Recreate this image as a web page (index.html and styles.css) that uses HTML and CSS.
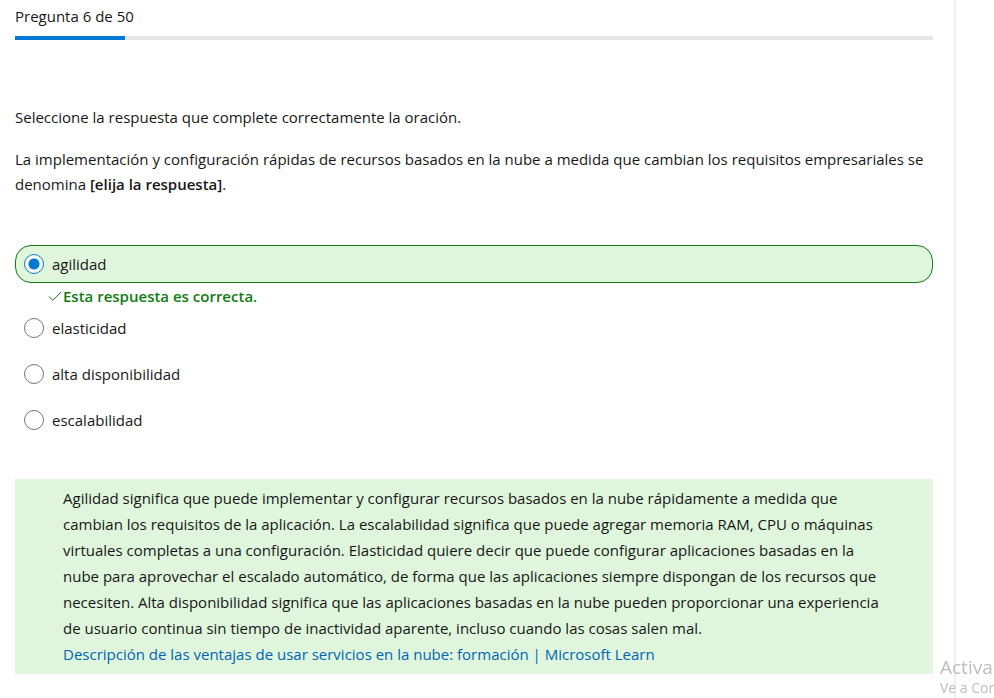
FILE: index.html
```html
<!DOCTYPE html>
<html lang="es">
<head>
<meta charset="utf-8">
<meta name="viewport" content="width=device-width, initial-scale=1">
<title>Pregunta 6 de 50</title>
<link rel="stylesheet" href="styles.css">
</head>
<body>
<main class="quiz">
  <header class="progress">
    <p class="progress-label" id="progress-label">Pregunta 6 de 50</p>
    <div class="progress-track" role="progressbar" aria-labelledby="progress-label" aria-valuemin="0" aria-valuemax="100" aria-valuenow="12">
      <div class="progress-bar" style="width: 12%"></div>
    </div>
  </header>

  <section class="question" id="question">
    <p>Seleccione la respuesta que complete correctamente la oración.</p>
    <p>La implementación y configuración rápidas de recursos basados en la nube a medida que cambian los requisitos empresariales se denomina <strong>[elija la respuesta]</strong>.</p>
  </section>

  <form class="answers" role="radiogroup" aria-labelledby="question">
    <label class="answer answer-correct"><input type="radio" name="answer" checked><span>agilidad</span></label>
    <p class="feedback">
      <svg class="check" viewBox="0 0 14 14" aria-hidden="true"><path d="M1 7.5 4.8 11.3 13 3"/></svg>
      <span>Esta respuesta es correcta.</span>
    </p>
    <label class="answer"><input type="radio" name="answer"><span>elasticidad</span></label>
    <label class="answer"><input type="radio" name="answer"><span>alta disponibilidad</span></label>
    <label class="answer"><input type="radio" name="answer"><span>escalabilidad</span></label>
  </form>

  <section class="explanation">
    <p>Agilidad significa que puede implementar y configurar recursos basados en la nube rápidamente a medida que cambian los requisitos de la aplicación. La escalabilidad significa que puede agregar memoria RAM, CPU o máquinas virtuales completas a una configuración. Elasticidad quiere decir que puede configurar aplicaciones basadas en la nube para aprovechar el escalado automático, de forma que las aplicaciones siempre dispongan de los recursos que necesiten. Alta disponibilidad significa que las aplicaciones basadas en la nube pueden proporcionar una experiencia de usuario continua sin tiempo de inactividad aparente, incluso cuando las cosas salen mal.</p>
    <a href="#">Descripción de las ventajas de usar servicios en la nube: formación | Microsoft Learn</a>
  </section>
</main>
<aside class="watermark">
  <p class="watermark-title">Activa</p>
  <p class="watermark-text">Ve a Cor</p>
</aside>
</body>
</html>
```
FILE: styles.css
```css
* {
  box-sizing: border-box;
}

body {
  margin: 0;
  color: #171717;
  background: #fff;
  font: 15px/25px "Segoe UI", "Open Sans", "Noto Sans", sans-serif;
}

p {
  margin: 0;
}

.quiz {
  min-height: 100vh;
  margin-right: 38px;
  padding: 4px 21px 20px 15px;
  border-right: 2px solid #f0f0f0;
}

.progress-track {
  height: 4px;
  margin-top: 7px;
  background: #e6e6e6;
}

.progress-bar {
  height: 100%;
  background: #0078d4;
}

.question {
  display: grid;
  gap: 17px;
  margin-top: 65px;
}

strong {
  font-weight: 600;
}

.answers {
  display: grid;
  gap: 8px;
  margin-top: 48px;
}

.answer {
  display: flex;
  align-items: center;
  gap: 8px;
  height: 38px;
  padding: 0 8px;
  border: 1px solid transparent;
  border-radius: 16px;
}

.answer-correct {
  border-color: #107c10;
  background: #dff6dd;
}

.answer input {
  appearance: none;
  flex: none;
  width: 20px;
  height: 20px;
  margin: 0;
  border: 1px solid #757575;
  border-radius: 50%;
  background: #fff;
}

.answer input:checked {
  border-color: #0078d4;
  background: radial-gradient(circle, #0078d4 5px, #fff 6px);
}

.feedback {
  display: flex;
  align-items: center;
  height: 10px;
  margin-left: 33px;
  color: #107c10;
  font-weight: 600;
}

.check {
  width: 14px;
  height: 14px;
  margin-right: 1px;
  fill: none;
  stroke: #107c10;
  stroke-width: 1;
}

.explanation {
  margin-top: 40px;
  padding: 6px 48px 7px;
  background: #dff6dd;
  line-height: 26px;
}

.explanation a {
  display: block;
  color: #0065b3;
  text-decoration: none;
}

.watermark {
  position: fixed;
  right: 0;
  bottom: 0;
  width: 54px;
  overflow: hidden;
  color: #bdbdbd;
  white-space: nowrap;
}

.watermark-title {
  font-size: 19px;
  line-height: 22px;
}

.watermark-text {
  font-size: 14px;
  line-height: 20px;
}
```
